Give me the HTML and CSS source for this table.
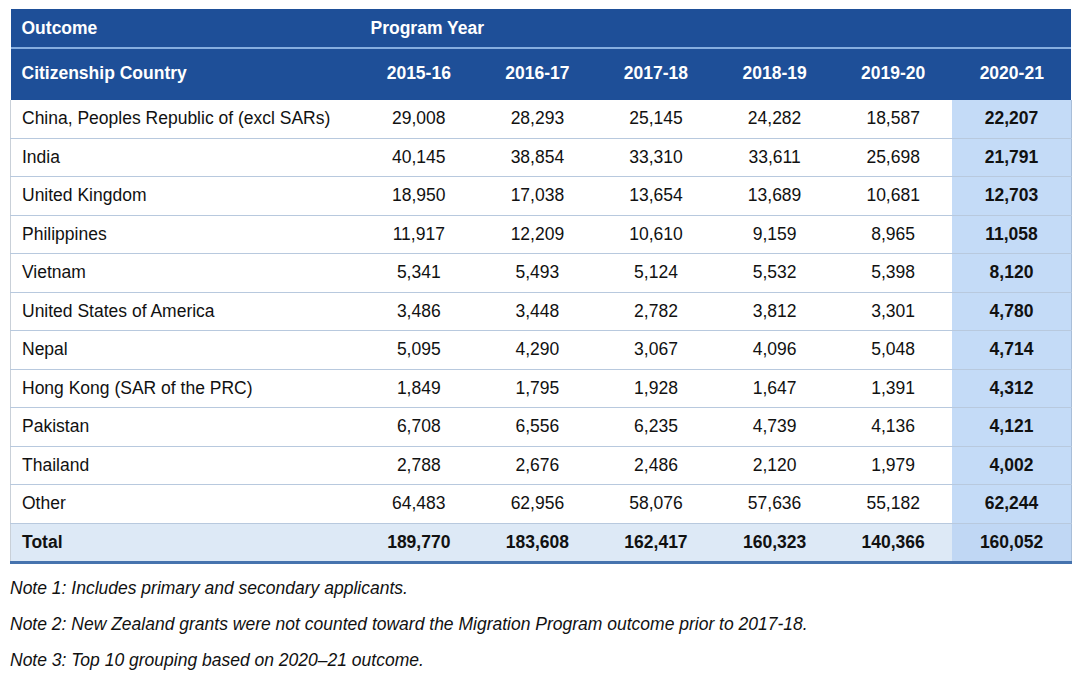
FILE: index.html
```html
<!DOCTYPE html>
<html>
<head>
<meta charset="utf-8">
<link rel="stylesheet" href="styles.css">
</head>
<body>
<div class="page">
<table class="grid">
  <colgroup>
    <col class="c-name">
    <col class="c-year"><col class="c-year"><col class="c-year"><col class="c-year"><col class="c-year"><col class="c-year">
  </colgroup>
  <thead>
    <tr class="h1">
      <th class="left">Outcome</th>
      <th class="left" colspan="6">Program Year</th>
    </tr>
    <tr class="h2">
      <th class="left">Citizenship Country</th>
      <th>2015-16</th><th>2016-17</th><th>2017-18</th><th>2018-19</th><th>2019-20</th><th class="hl">2020-21</th>
    </tr>
  </thead>
  <tbody>
    <tr><td class="name">China, Peoples Republic of (excl SARs)</td><td>29,008</td><td>28,293</td><td>25,145</td><td>24,282</td><td>18,587</td><td class="last">22,207</td></tr>
    <tr><td class="name">India</td><td>40,145</td><td>38,854</td><td>33,310</td><td>33,611</td><td>25,698</td><td class="last">21,791</td></tr>
    <tr><td class="name">United Kingdom</td><td>18,950</td><td>17,038</td><td>13,654</td><td>13,689</td><td>10,681</td><td class="last">12,703</td></tr>
    <tr><td class="name">Philippines</td><td>11,917</td><td>12,209</td><td>10,610</td><td>9,159</td><td>8,965</td><td class="last">11,058</td></tr>
    <tr><td class="name">Vietnam</td><td>5,341</td><td>5,493</td><td>5,124</td><td>5,532</td><td>5,398</td><td class="last">8,120</td></tr>
    <tr><td class="name">United States of America</td><td>3,486</td><td>3,448</td><td>2,782</td><td>3,812</td><td>3,301</td><td class="last">4,780</td></tr>
    <tr><td class="name">Nepal</td><td>5,095</td><td>4,290</td><td>3,067</td><td>4,096</td><td>5,048</td><td class="last">4,714</td></tr>
    <tr><td class="name">Hong Kong (SAR of the PRC)</td><td>1,849</td><td>1,795</td><td>1,928</td><td>1,647</td><td>1,391</td><td class="last">4,312</td></tr>
    <tr><td class="name">Pakistan</td><td>6,708</td><td>6,556</td><td>6,235</td><td>4,739</td><td>4,136</td><td class="last">4,121</td></tr>
    <tr><td class="name">Thailand</td><td>2,788</td><td>2,676</td><td>2,486</td><td>2,120</td><td>1,979</td><td class="last">4,002</td></tr>
    <tr><td class="name">Other</td><td>64,483</td><td>62,956</td><td>58,076</td><td>57,636</td><td>55,182</td><td class="last">62,244</td></tr>
    <tr class="total"><td class="name">Total</td><td>189,770</td><td>183,608</td><td>162,417</td><td>160,323</td><td>140,366</td><td class="last">160,052</td></tr>
  </tbody>
</table>
<div class="notes">
  <p>Note 1: Includes primary and secondary applicants.</p>
  <p>Note 2: New Zealand grants were not counted toward the Migration Program outcome prior to 2017-18.</p>
  <p>Note 3: Top 10 grouping based on 2020–21 outcome.</p>
</div>
</div>
</body>
</html>
```

FILE: styles.css
```css
html, body {
  margin: 0;
  padding: 0;
  background: #ffffff;
}
.page {
  padding: 9px 9px 0 10px;
  font-family: "Liberation Sans", Arial, sans-serif;
  color: #111111;
}
.grid {
  width: 1061px;
  border-collapse: collapse;
  table-layout: fixed;
  font-size: 17.5px;
}
.c-name { width: 349px; }
.c-year { width: 118.6px; }
.grid th {
  background: #1e4f98;
  color: #ffffff;
  font-weight: bold;
  font-size: 17.5px;
  text-align: center;
  padding: 0;
}
.grid th.left {
  text-align: left;
  padding-left: 11px;
}
.h1 th {
  height: 37px;
  padding-top: 1px;
  border-bottom: 2px solid #86aee0;
}
.h2 th {
  height: 48px;
  padding-bottom: 3px;
}
.grid td {
  height: 37.5px;
  padding: 0;
  text-align: center;
  border-bottom: 1px solid #b8c9de;
  background: #ffffff;
}
.grid td.name {
  text-align: left;
  padding-left: 11px;
  border-left: 1px solid #c9d0d8;
}
.grid td.last {
  background: #c4dbf7;
  font-weight: bold;
  border-right: 1px solid #a9bed8;
}
.total td {
  background: #dde9f6;
  font-weight: bold;
  border-bottom: 3px solid #4673ae;
}
.total td.last {
  background: #c0d7f4;
}
.notes {
  font-style: italic;
  font-size: 17.5px;
  color: #111111;
  padding-top: 13px;
}
.notes p {
  margin: 0;
  height: 36px;
  line-height: 22px;
}
```
